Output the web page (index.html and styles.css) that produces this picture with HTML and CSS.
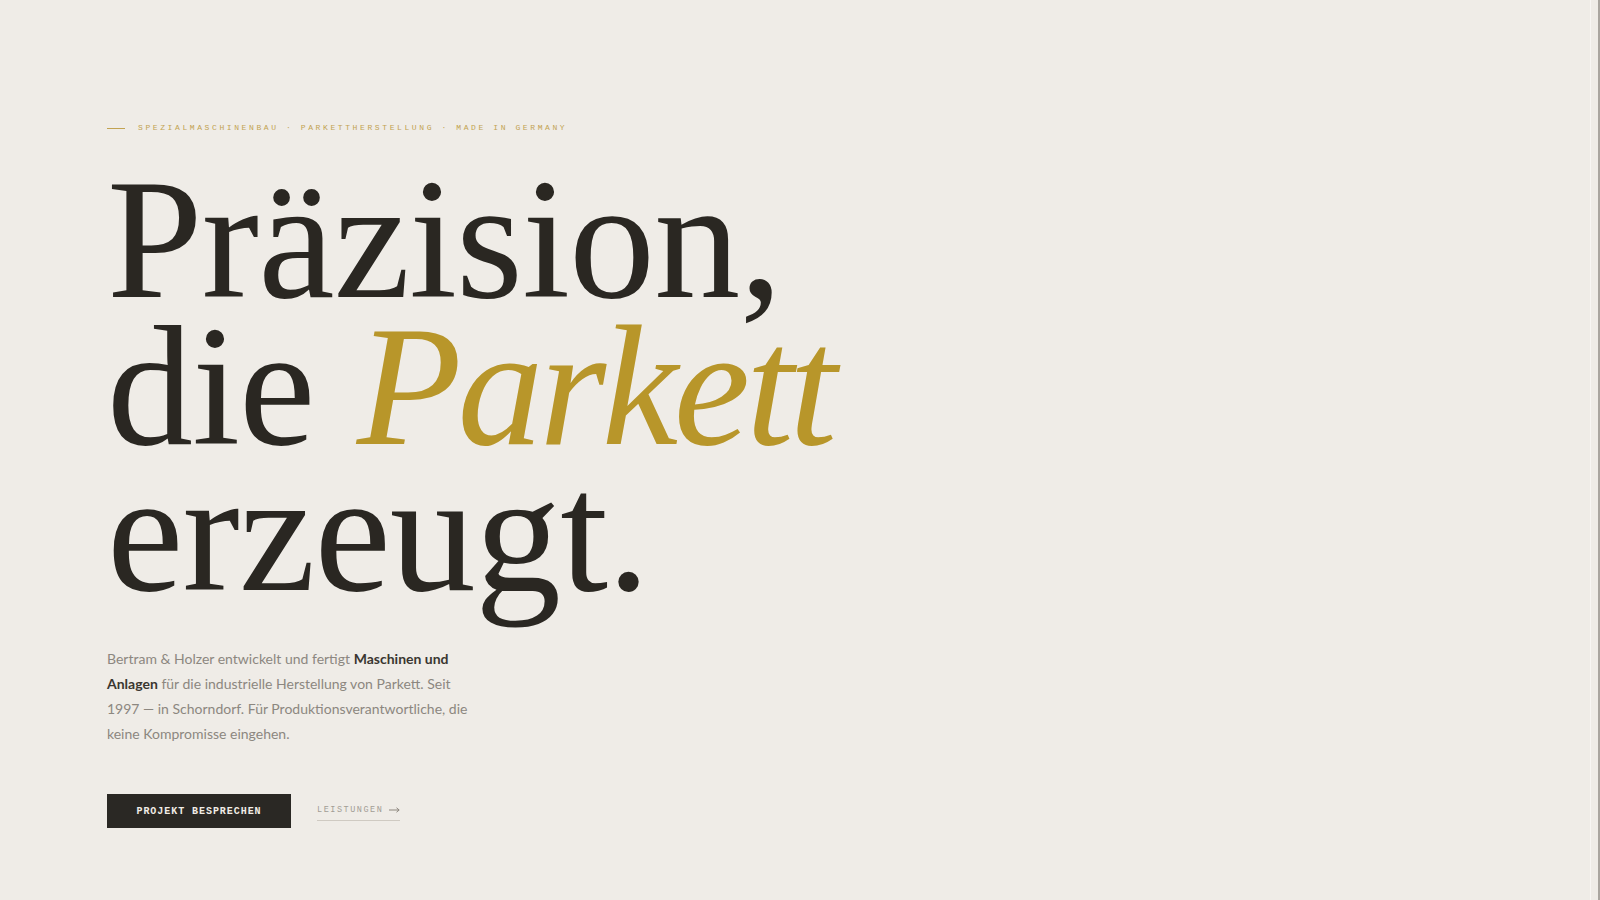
FILE: index.html
```html
<!DOCTYPE html>
<html lang="de">
<head>
<meta charset="utf-8">
<title>Bertram &amp; Holzer</title>
<link rel="stylesheet" href="styles.css">
</head>
<body>
<main class="hero">
  <p class="eyebrow"><span class="eyebrow-rule"></span>SPEZIALMASCHINENBAU · PARKETTHERSTELLUNG · MADE IN GERMANY</p>
  <h1 class="headline">Präzision,<br>die <em class="accent">Parkett</em><br>erzeugt.</h1>
  <p class="lead">Bertram &amp; Holzer entwickelt und fertigt <strong>Maschinen und Anlagen</strong> für die industrielle Herstellung von Parkett. Seit 1997 — in Schorndorf. Für Produktionsverantwortliche, die keine Kompromisse eingehen.</p>
  <div class="actions">
    <a class="btn-primary" href="#">PROJEKT BESPRECHEN</a>
    <a class="link-secondary" href="#">LEISTUNGEN <svg class="arrow" width="11" height="6" viewBox="0 0 11 6" aria-hidden="true"><path d="M0 3H10M7.5 0.8L10.2 3L7.5 5.2" fill="none" stroke="currentColor" stroke-width="1"/></svg></a>
  </div>
</main>
<div class="edge" aria-hidden="true"></div>
</body>
</html>
```

FILE: styles.css
```css
html, body {
  margin: 0;
  padding: 0;
  background: #efece7;
  height: 100%;
  overflow: hidden;
}

body {
  font-family: "Lato", "Liberation Sans", sans-serif;
  color: #2a2722;
}

.hero {
  padding: 121px 0 0 107px;
  display: flex;
  flex-direction: column;
  align-items: flex-start;
}

.eyebrow {
  margin: 0;
  display: flex;
  align-items: center;
  font-family: "Liberation Mono", monospace;
  font-size: 8px;
  line-height: 14px;
  letter-spacing: 0.325em;
  color: #c2a352;
  white-space: nowrap;
}

.eyebrow-rule {
  display: inline-block;
  width: 18px;
  height: 1px;
  background: #c2a352;
  margin-right: 13px;
}

.headline {
  margin: 31px 0 0 0;
  font-family: "Liberation Serif", serif;
  font-weight: 400;
  font-size: 172px;
  line-height: 146.5px;
  letter-spacing: -0.005em;
  color: #2a2722;
}

.accent {
  font-style: italic;
  letter-spacing: -0.025em;
  color: #b8962a;
}

.lead {
  margin: 40px 0 0 0;
  max-width: 372px;
  font-size: 14px;
  line-height: 25.2px;
  color: #8c8780;
  font-weight: 400;
}

.lead strong {
  font-weight: 700;
  color: #3a3630;
}

.actions {
  margin-top: 48px;
  display: flex;
  align-items: center;
  gap: 26px;
}

.btn-primary {
  display: inline-flex;
  align-items: center;
  justify-content: center;
  height: 34px;
  width: 184px;
  box-sizing: border-box;
  background: #2a2824;
  color: #f1ede6;
  font-family: "Liberation Mono", monospace;
  font-weight: 700;
  font-size: 10px;
  letter-spacing: 0.095em;
  text-decoration: none;
}

.link-secondary {
  display: inline-flex;
  align-items: center;
  gap: 6px;
  padding-bottom: 4px;
  margin-top: 2px;
  border-bottom: 1px solid #cfcac2;
  font-family: "Liberation Mono", monospace;
  font-size: 8.5px;
  letter-spacing: 0.18em;
  color: #a29d95;
  text-decoration: none;
  line-height: 12px;
}

.arrow {
  display: block;
  color: #8d877f;
}

.edge {
  position: fixed;
  top: 0;
  right: 0;
  bottom: 0;
  width: 10px;
  box-sizing: border-box;
  border-left: 1px solid #f8f6f3;
  border-right: 2px solid #aaa6a0;
}
```
